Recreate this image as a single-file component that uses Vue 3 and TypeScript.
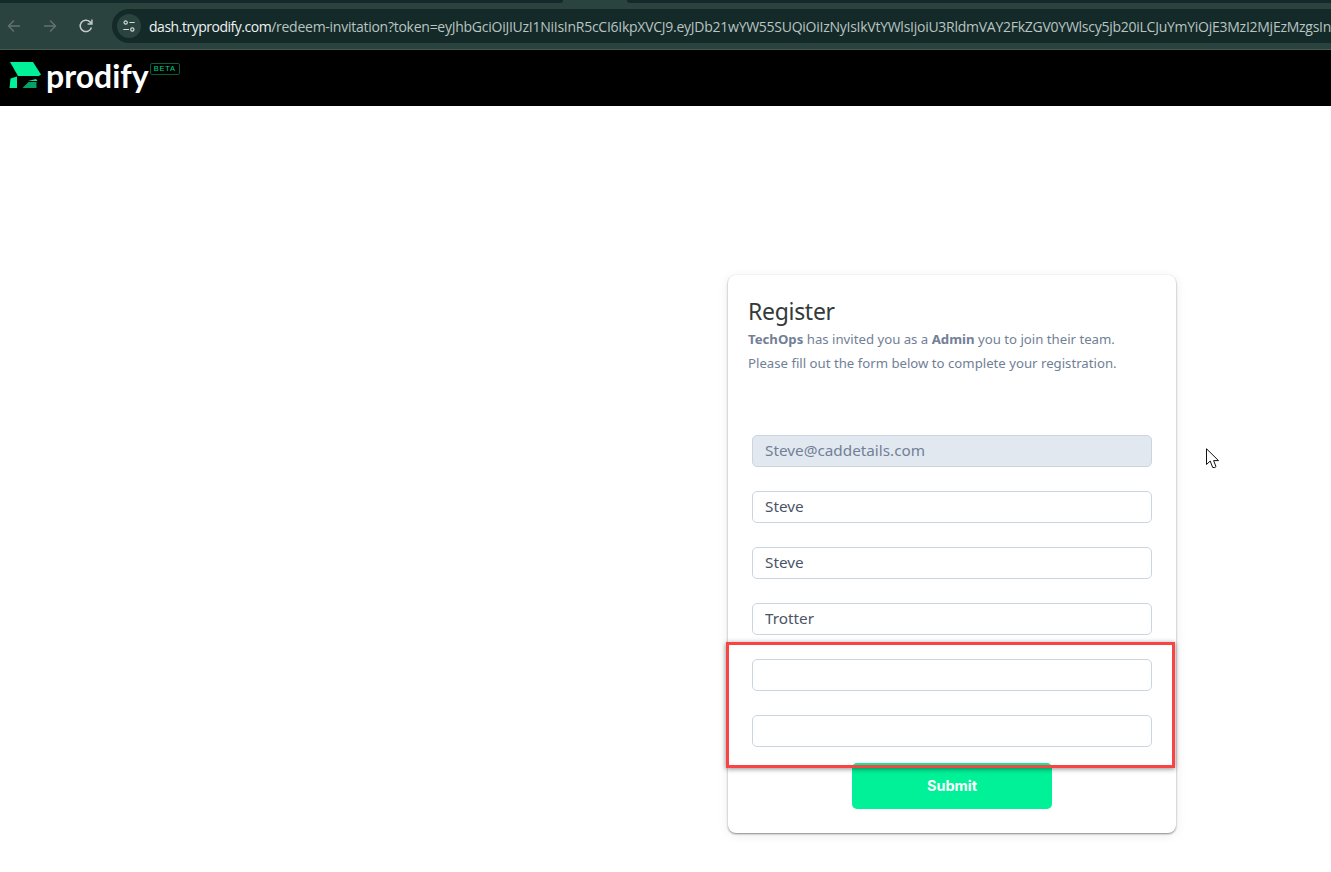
<script setup lang="ts">
const fields: { value: string; disabled?: boolean }[] = [
  { value: 'Steve@caddetails.com', disabled: true },
  { value: 'Steve' },
  { value: 'Steve' },
  { value: 'Trotter' },
  { value: '' },
  { value: '' },
]
const urlRest =
  '/redeem-invitation?token=eyJhbGciOiJIUzI1NiIsInR5cCI6IkpXVCJ9.eyJDb21wYW55SUQiOiIzNyIsIkVtYWlsIjoiU3RldmVAY2FkZGV0YWlscy5jb20iLCJuYmYiOjE3MzI2MjEzMzgsIn'
</script>

<template>
  <div class="page">
    <div class="chrome">
      <div class="tabstrip">
        <div class="tab-rest left"></div>
        <div class="tab-gap"></div>
        <div class="tab-rest"></div>
      </div>
      <div class="toolbar">
        <svg class="nav" viewBox="0 0 16 16" fill="none" stroke="#63726f" stroke-width="1.4">
          <path d="M14 8H2.500M8 2.500 2.500 8 8 13.500" />
        </svg>
        <svg class="nav" viewBox="0 0 16 16" fill="none" stroke="#63726f" stroke-width="1.4">
          <path d="M2 8h11.500M8 2.500 13.500 8 8 13.500" />
        </svg>
        <svg class="nav reload" viewBox="0 0 16 16" fill="none" stroke="#c3ccc9" stroke-width="1.5">
          <path d="M13.400 9.500A5.700 5.700 0 1 1 12 3.900L13.700 5.600" />
          <path d="M13.900 1.600v4.300H9.600" />
        </svg>
        <div class="omnibox">
          <div class="site">
            <svg viewBox="0 0 16 16" fill="none" stroke="#d5dedb" stroke-width="1.3">
              <circle cx="4.200" cy="4" r="1.900" />
              <path d="M8.500 4h6" />
              <circle cx="11.800" cy="12" r="1.900" />
              <path d="M1.500 12h6.500" />
            </svg>
          </div>
          <div class="url"><span class="host">dash.tryprodify.com</span>{{ urlRest }}</div>
        </div>
      </div>
    </div>

    <header class="topbar">
      <svg class="mark" viewBox="0 0 33 28">
        <path fill="#00f197" d="M1 1H24L32 13.500L30 15H9Z" />
        <path fill="#00f197" d="M1.500 17.500L8 15.500V27H0.500Z" />
        <path fill="#00f197" d="M19 20L27 18L28.500 20Z" />
        <path fill="#07a066" d="M13.500 27L19.500 21H27.500V27Z" />
      </svg>
      <span class="word">prodify</span>
      <span class="beta">BETA</span>
    </header>

    <main class="stage">
      <section class="card">
        <h1 class="title">Register</h1>
        <p class="line"><b>TechOps</b> has invited you as a <b>Admin</b> you to join their team.</p>
        <p class="line">Please fill out the form below to complete your registration.</p>
        <form class="form" @submit.prevent>
          <input
            v-for="(f, i) in fields"
            :key="i"
            class="field"
            type="text"
            :value="f.value"
            :disabled="f.disabled"
          />
          <button class="submit" type="submit">Submit</button>
        </form>
        <div class="highlight"></div>
      </section>

      <svg class="cursor" viewBox="0 0 13 21">
        <path
          fill="#fff"
          stroke="#111"
          stroke-width="1"
          d="M0.500 0.800V16.500L4.200 13L6.700 19.500H8.800L10 18.600L7.600 12.600H12.500Z"
        />
      </svg>
    </main>
  </div>
</template>

<style scoped>
.page {
  width: 1331px;
  height: 872px;
  overflow: hidden;
  background: #fff;
  display: flex;
  flex-direction: column;
}
.chrome {
  height: 50px;
  flex: none;
  display: flex;
  flex-direction: column;
  background: #2b433f;
  border-bottom: 1px solid #47594f;
  box-sizing: border-box;
}
.tabstrip {
  height: 3px;
  flex: none;
  display: flex;
}
.tab-rest {
  flex: 1;
  background: #13292a;
  border-radius: 0 0 0 3px;
}
.tab-rest.left {
  flex: none;
  width: 563px;
  border-radius: 0 0 3px 0;
}
.tab-gap {
  width: 64px;
  flex: none;
}
.toolbar {
  flex: 1;
  display: flex;
  align-items: center;
  padding: 6px 0 6px 6px;
  min-width: 0;
}
.nav {
  width: 16px;
  height: 16px;
  flex: none;
  margin-right: 20px;
}
.nav.reload {
  margin-right: 18px;
}
.omnibox {
  flex: 1;
  min-width: 0;
  height: 34px;
  background: #142a29;
  border-radius: 17px 0 0 17px;
  display: flex;
  align-items: center;
  padding-left: 5px;
  overflow: hidden;
}
.site {
  width: 24px;
  height: 24px;
  border-radius: 50%;
  background: #2b433f;
  flex: none;
  display: flex;
  align-items: center;
  justify-content: center;
  margin-right: 8px;
}
.site svg {
  width: 14px;
  height: 14px;
}
.url {
  font-family: 'Open Sans', sans-serif;
  font-size: 14px;
  letter-spacing: -0.26px;
  color: #b9c4c1;
  white-space: nowrap;
}
.host {
  color: #eef2f1;
  letter-spacing: -0.48px;
}
.topbar {
  height: 56px;
  flex: none;
  background: #000;
  display: flex;
  align-items: flex-start;
  padding-left: 9px;
  box-sizing: border-box;
}
.mark {
  width: 33px;
  height: 28px;
  margin-top: 11px;
  flex: none;
}
.word {
  font-family: 'Lato', sans-serif;
  font-weight: 700;
  font-size: 32px;
  line-height: 36px;
  color: #fff;
  margin: 8px 0 0 4px;
}
.beta {
  font-family: 'Liberation Sans', sans-serif;
  font-size: 7.500px;
  letter-spacing: 0.8px;
  line-height: 10px;
  color: #00d080;
  border: 1px solid #0a5a3c;
  border-radius: 2px;
  padding: 0 3px 0 3px;
  margin: 13px 0 0 1px;
}
.stage {
  flex: 1;
  position: relative;
  padding: 169px 0 0 728px;
}
.card {
  position: relative;
  width: 448px;
  height: 558px;
  box-sizing: border-box;
  padding: 20px 20px 0;
  background: #fff;
  border-radius: 8px;
  box-shadow: 0 1px 2px rgba(0, 0, 0, 0.45), 0 2px 12px rgba(0, 0, 0, 0.08);
  font-family: 'Noto Sans', sans-serif;
}
.title {
  margin: 0;
  font-weight: 400;
  font-size: 23px;
  letter-spacing: -0.3px;
  line-height: 32px;
  color: #333a3a;
}
.line {
  margin: 0;
  font-size: 13.200px;
  line-height: 24px;
  color: #718096;
}
.line b {
  font-weight: 700;
}
.form {
  display: flex;
  flex-direction: column;
  gap: 24px;
  padding: 0 4px;
  margin-top: 60px;
}
.field {
  height: 32px;
  box-sizing: border-box;
  border: 1px solid #cbd5e0;
  border-radius: 5px;
  padding: 0 12px 2px;
  background: #fff;
  font-family: 'Noto Sans', sans-serif;
  font-size: 15.300px;
  color: #4a5568;
  outline: none;
}
.field:disabled {
  background: #e2e8f0;
  color: #718096;
}
.submit {
  align-self: center;
  width: 200px;
  height: 46px;
  margin-top: -8px;
  padding: 0 0 2px;
  border: 0;
  border-radius: 5px;
  background: #00f197;
  color: #fff;
  font-family: 'Inter', sans-serif;
  font-weight: 700;
  font-size: 14.500px;
}
.highlight {
  position: absolute;
  left: -2px;
  top: 367px;
  width: 449px;
  height: 126px;
  box-sizing: border-box;
  border: 3px solid #f94446;
  box-shadow: 0 1px 5px rgba(0, 0, 0, 0.45);
  pointer-events: none;
}
.cursor {
  position: absolute;
  left: 1206px;
  top: 342px;
  width: 13px;
  height: 21px;
}
</style>
